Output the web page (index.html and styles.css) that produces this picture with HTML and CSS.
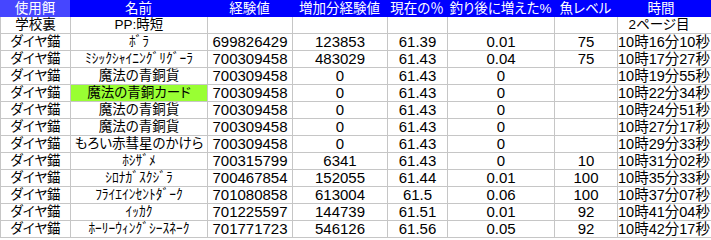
FILE: index.html
```html
<!DOCTYPE html>
<html lang="ja">
<head>
<meta charset="utf-8">
<title>釣り記録</title>
<link rel="stylesheet" href="styles.css">
</head>
<body>
<div class="sheet">
  <div class="hdr">
    <div class="sel">使用餌</div>
    <div>名前</div>
    <div>経験値</div>
    <div>増加分経験値</div>
    <div>現在の％</div>
    <div>釣り後に増えた%</div>
    <div>魚レベル</div>
    <div class="last">時間</div>
  </div>
  <div class="grid">
    <div>学校裏</div><div>PP:時短</div><div></div><div></div><div></div><div></div><div></div><div class="page">2ページ目</div>
    <div>ダイヤ錨</div><div>ﾎﾞﾗ</div><div>699826429</div><div>123853</div><div>61.39</div><div>0.01</div><div>75</div><div class="t">10時16分10秒</div>
    <div>ダイヤ錨</div><div>ﾐｼｯｸｼｬｲﾆﾝｸﾞﾘｸﾞｰﾗ</div><div>700309458</div><div>483029</div><div>61.43</div><div>0.04</div><div>75</div><div class="t">10時17分27秒</div>
    <div>ダイヤ錨</div><div>魔法の青銅貨</div><div>700309458</div><div>0</div><div>61.43</div><div>0</div><div></div><div class="t">10時19分55秒</div>
    <div>ダイヤ錨</div><div class="hl">魔法の青銅カード</div><div>700309458</div><div>0</div><div>61.43</div><div>0</div><div></div><div class="t">10時22分34秒</div>
    <div>ダイヤ錨</div><div>魔法の青銅貨</div><div>700309458</div><div>0</div><div>61.43</div><div>0</div><div></div><div class="t">10時24分51秒</div>
    <div>ダイヤ錨</div><div>魔法の青銅貨</div><div>700309458</div><div>0</div><div>61.43</div><div>0</div><div></div><div class="t">10時27分17秒</div>
    <div>ダイヤ錨</div><div>もろい赤彗星のかけら</div><div>700309458</div><div>0</div><div>61.43</div><div>0</div><div></div><div class="t">10時29分33秒</div>
    <div>ダイヤ錨</div><div>ﾎｼｻﾞﾒ</div><div>700315799</div><div>6341</div><div>61.43</div><div>0</div><div>10</div><div class="t">10時31分02秒</div>
    <div>ダイヤ錨</div><div>ｼﾛﾅｶﾞｽｸｼﾞﾗ</div><div>700467854</div><div>152055</div><div>61.44</div><div>0.01</div><div>100</div><div class="t">10時35分33秒</div>
    <div>ダイヤ錨</div><div>ﾌﾗｲｴｲﾝｾﾝﾄﾀﾞｰｸ</div><div>701080858</div><div>613004</div><div>61.5</div><div>0.06</div><div>100</div><div class="t">10時37分07秒</div>
    <div>ダイヤ錨</div><div>ｲｯｶｸ</div><div>701225597</div><div>144739</div><div>61.51</div><div>0.01</div><div>92</div><div class="t">10時41分04秒</div>
    <div>ダイヤ錨</div><div>ﾎｰﾘｰｳｨﾝｸﾞｼｰｽﾈｰｸ</div><div>701771723</div><div>546126</div><div>61.56</div><div>0.05</div><div>92</div><div class="t">10時42分17秒</div>
  </div>
</div>
</body>
</html>
```

FILE: styles.css
```css
html, body {
  margin: 0;
  padding: 0;
  background: #ffffff;
  overflow: hidden;
}

body {
  font-family: "Liberation Sans", "Noto Sans CJK JP", sans-serif;
  font-size: 13.5px;
  color: #000000;
  font-feature-settings: "palt";
}

.sheet {
  width: 711px;
  height: 240px;
  overflow: hidden;
}

.hdr {
  display: grid;
  grid-template-columns: 70px 137px 85px 95px 60px 107px 63px 94px;
  height: 17px;
  background: #0000ff;
  color: #ffffff;
}

.hdr > div {
  text-align: center;
  line-height: 17px;
  white-space: nowrap;
}

.hdr .sel {
  background: #4646ff;
}

.hdr .last {
  padding-right: 6px;
}

.grid {
  display: grid;
  grid-template-columns: 69px 136px 84px 94px 59px 106px 62px 100px;
  grid-auto-rows: 16px;
  gap: 1px;
  padding: 0 0 1px 1px;
  background: #c6c6c6;
}

.grid > div {
  background: #ffffff;
  text-align: center;
  line-height: 16px;
  white-space: nowrap;
  overflow: visible;
}

.grid > div:nth-child(8n+3),
.grid > div:nth-child(8n+4),
.grid > div:nth-child(8n+5),
.grid > div:nth-child(8n+6),
.grid > div:nth-child(8n+7) {
  font-size: 15px;
}

.grid > .hl {
  background: #99ff33;
}

.grid > .t {
  text-align: left;
  font-size: 14.5px;
}

.grid > .page {
  padding-right: 18px;
}
```
